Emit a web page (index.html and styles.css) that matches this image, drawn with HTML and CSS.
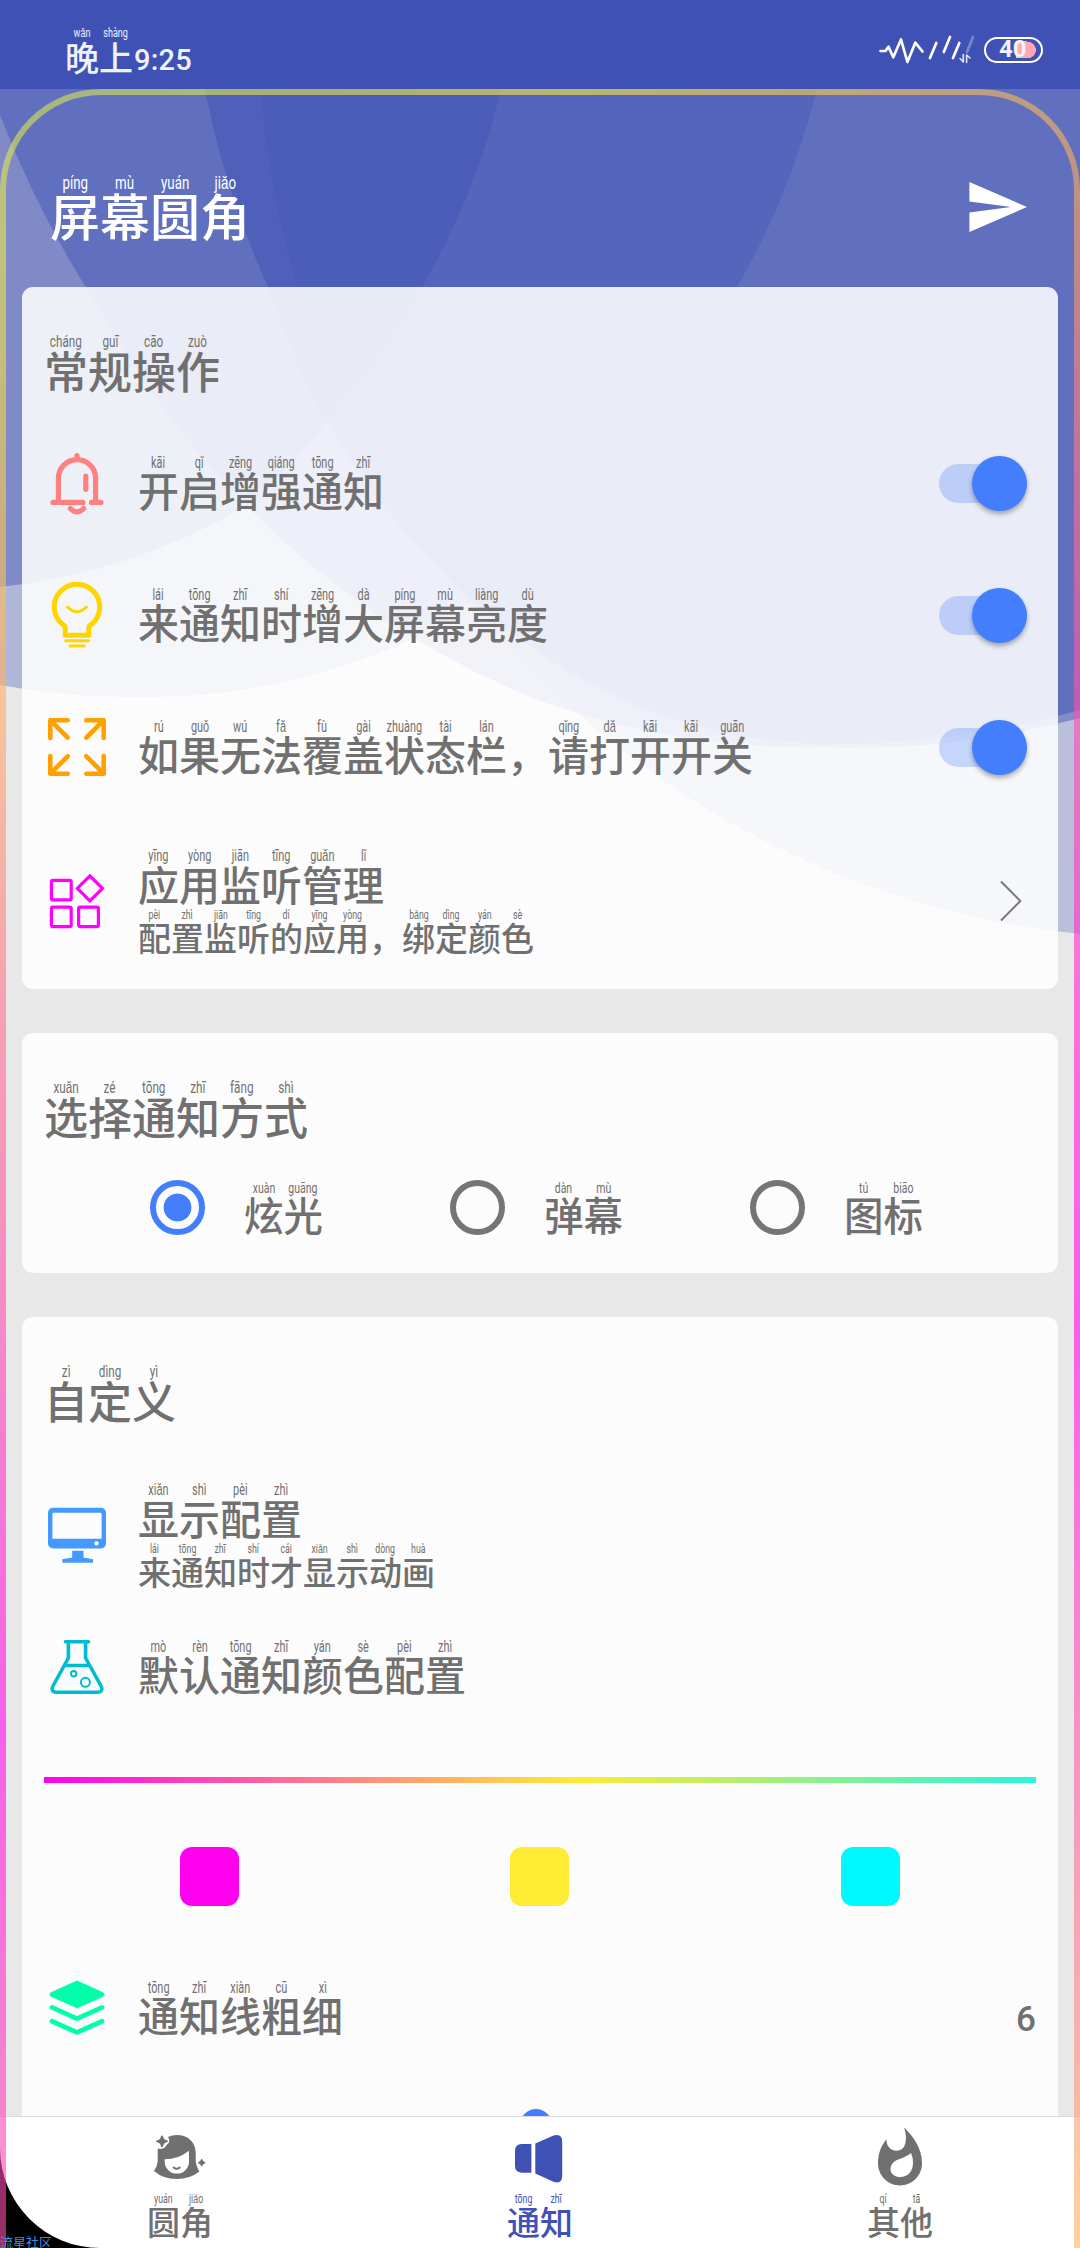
FILE: index.html
```html
<!DOCTYPE html>
<html lang="zh-CN">
<head>
<meta charset="utf-8">
<title>屏幕圆角</title>
<link rel="stylesheet" href="styles.css">
</head>
<body>
<svg class="backdrop" width="1080" height="911" viewBox="0 89 1080 911" aria-hidden="true">
  <g fill="#3f51b5">
    <path fill-opacity=".33" d="M0 89H817A760 760 0 0 1 737 287A720 720 0 0 1 540 545A660 660 0 0 1 410 640A640 640 0 0 1 140 697A700 700 0 0 1 0 685Z"/>
    <path fill-opacity=".44" d="M0 89H501A700 700 0 0 1 422 287A640 640 0 0 1 344 400A600 600 0 0 1 248 505A620 620 0 0 1 0 587Z"/>
    <path fill-opacity=".27" d="M261 89A892 892 0 0 0 540 678A892 892 0 0 0 1080 934V89Z"/>
    <path fill-opacity=".46" d="M0 89V115A1000 1000 0 0 0 94 300A900 900 0 0 0 248 507A860 860 0 0 0 540 701A800 800 0 0 0 826 747A860 860 0 0 0 1080 718V89Z"/>
    <path fill-opacity=".49" d="M205 89A900 900 0 0 0 268 287A700 700 0 0 0 540 653A520 520 0 0 0 820 744A900 900 0 0 0 1080 710V89Z"/>
  </g>
</svg>

<header class="status">
  <div class="clock zh"><ruby>晚<rt>wǎn</rt></ruby><ruby>上<rt>shàng</rt></ruby><span class="time">9:25</span></div>
  <div class="tray">
    <svg width="96" height="32" viewBox="879 34 96 32" fill="none" stroke="#fff" stroke-width="2.7" stroke-linecap="round" stroke-linejoin="round">
      <path d="M880.5 51H885.5L888.5 46.7L893.3 57.3L901 39.5L907.4 62L915.3 42.7L922.5 51.5"/>
      <path d="M930 58L936.3 43M943.8 52L950 37M953 58L959.3 43"/>
      <path d="M967 52L973 37" opacity=".3"/>
      <path d="M960 58.5L963.3 62V54.5M970 58L966.6 55V62.5" stroke-width="1.6" opacity=".85"/>
    </svg>
    <div class="battery"><span class="level">40</span></div>
  </div>
</header>

<section class="titlebar">
  <h1 class="zh"><ruby>屏<rt>píng</rt></ruby><ruby>幕<rt>mù</rt></ruby><ruby>圆<rt>yuán</rt></ruby><ruby>角<rt>jiǎo</rt></ruby></h1>
  <svg class="send" width="58" height="50" viewBox="0 0 58 50"><path fill="#fff" d="M.4 0L58 25L.4 50V30.6L42 25L.4 19.4Z"/></svg>
</section>

<main>
  <section class="card">
    <h2 class="zh"><ruby>常<rt>cháng</rt></ruby><ruby>规<rt>guī</rt></ruby><ruby>操<rt>cāo</rt></ruby><ruby>作<rt>zuò</rt></ruby></h2>

    <div class="row">
      <svg class="icon" viewBox="-33 -35 66 70" fill="none" stroke="#ff8080" stroke-width="5.2" stroke-linecap="round">
        <path d="M0-27.5V-24M-18.6 19V-4.8A18.6 18.6 0 0 1 18.6-4.8V19"/>
        <path d="M-24 19.4H5.8M14.5 19.4H24M8.8-7V6.3M-6.7 25.5Q0 32.3 6.7 25.5"/>
      </svg>
      <p class="label zh"><ruby>开<rt>kāi</rt></ruby><ruby>启<rt>qǐ</rt></ruby><ruby>增<rt>zēng</rt></ruby><ruby>强<rt>qiáng</rt></ruby><ruby>通<rt>tōng</rt></ruby><ruby>知<rt>zhī</rt></ruby></p>
      <span class="switch"></span>
    </div>

    <div class="row">
      <svg class="icon" viewBox="-33 -35 66 70" fill="none" stroke="#ffd500" stroke-width="5" stroke-linecap="round">
        <path stroke-linejoin="round" d="M-11.8 20.3V13Q-11.8 11-14 9.8A22.7 22.7 0 1 1 14 9.8Q11.8 11 11.8 13V20.3Z"/>
        <path stroke-width="3" d="M-11.4 25.8H11.6M-7 31H7.2M-9.5-8Q0 1.5 9.5-8"/>
      </svg>
      <p class="label zh"><ruby>来<rt>lái</rt></ruby><ruby>通<rt>tōng</rt></ruby><ruby>知<rt>zhī</rt></ruby><ruby>时<rt>shí</rt></ruby><ruby>增<rt>zēng</rt></ruby><ruby>大<rt>dà</rt></ruby><ruby>屏<rt>píng</rt></ruby><ruby>幕<rt>mù</rt></ruby><ruby>亮<rt>liàng</rt></ruby><ruby>度<rt>dù</rt></ruby></p>
      <span class="switch"></span>
    </div>

    <div class="row">
      <svg class="icon" viewBox="-33 -35 66 70" fill="none" stroke="#ffa000" stroke-width="4.6" stroke-linecap="round" stroke-linejoin="round">
        <path d="M-9.3-26.7H-26.7V-9M-26.7-26.7L-9.3-9.3"/>
        <path d="M9.3-26.7H26.7V-9M26.7-26.7L9.3-9.3"/>
        <path d="M-9.3 26.7H-26.7V9M-26.7 26.7L-9.3 9.3"/>
        <path d="M9.3 26.7H26.7V9M26.7 26.7L9.3 9.3"/>
      </svg>
      <p class="label zh"><ruby>如<rt>rú</rt></ruby><ruby>果<rt>guǒ</rt></ruby><ruby>无<rt>wú</rt></ruby><ruby>法<rt>fǎ</rt></ruby><ruby>覆<rt>fù</rt></ruby><ruby>盖<rt>gài</rt></ruby><ruby>状<rt>zhuàng</rt></ruby><ruby>态<rt>tài</rt></ruby><ruby>栏<rt>lán</rt></ruby><span class="comma">，</span><ruby>请<rt>qǐng</rt></ruby><ruby>打<rt>dǎ</rt></ruby><ruby>开<rt>kāi</rt></ruby><ruby>开<rt>kāi</rt></ruby><ruby>关<rt>guān</rt></ruby></p>
      <span class="switch"></span>
    </div>

    <div class="row row-tall">
      <svg class="icon" viewBox="-33 -35 66 70" fill="none" stroke="#f0f" stroke-width="3.2">
        <rect x="-25.6" y="-20.7" width="19.8" height="19.6" rx="1.5"/>
        <rect x="-25.6" y="6.2" width="19.8" height="19.4" rx="1.5"/>
        <rect x="1.6" y="6.2" width="19.8" height="19.4" rx="1.5"/>
        <path stroke-linejoin="round" d="M12.9-25.2L25.5-12.7L12.9-.2L.3-12.7Z"/>
      </svg>
      <div class="stack">
        <p class="label zh"><ruby>应<rt>yīng</rt></ruby><ruby>用<rt>yòng</rt></ruby><ruby>监<rt>jiān</rt></ruby><ruby>听<rt>tīng</rt></ruby><ruby>管<rt>guǎn</rt></ruby><ruby>理<rt>lǐ</rt></ruby></p>
        <p class="hint zh"><ruby>配<rt>pèi</rt></ruby><ruby>置<rt>zhì</rt></ruby><ruby>监<rt>jiān</rt></ruby><ruby>听<rt>tīng</rt></ruby><ruby>的<rt>dí</rt></ruby><ruby>应<rt>yīng</rt></ruby><ruby>用<rt>yòng</rt></ruby><span class="comma">，</span><ruby>绑<rt>bǎng</rt></ruby><ruby>定<rt>dìng</rt></ruby><ruby>颜<rt>yán</rt></ruby><ruby>色<rt>sè</rt></ruby></p>
      </div>
      <svg class="chevron" width="24" height="44" viewBox="0 0 24 44"><path fill="none" stroke="#777" stroke-width="2" d="M2 2.5L21.3 22L2 41.5"/></svg>
    </div>
  </section>

  <section class="card">
    <h2 class="zh"><ruby>选<rt>xuǎn</rt></ruby><ruby>择<rt>zé</rt></ruby><ruby>通<rt>tōng</rt></ruby><ruby>知<rt>zhī</rt></ruby><ruby>方<rt>fāng</rt></ruby><ruby>式<rt>shì</rt></ruby></h2>
    <div class="radios">
      <div class="radio checked"><i></i><p class="zh"><ruby>炫<rt>xuàn</rt></ruby><ruby>光<rt>guāng</rt></ruby></p></div>
      <div class="radio"><i></i><p class="zh"><ruby>弹<rt>dàn</rt></ruby><ruby>幕<rt>mù</rt></ruby></p></div>
      <div class="radio"><i></i><p class="zh"><ruby>图<rt>tú</rt></ruby><ruby>标<rt>biāo</rt></ruby></p></div>
    </div>
  </section>

  <section class="card">
    <h2 class="zh"><ruby>自<rt>zì</rt></ruby><ruby>定<rt>dìng</rt></ruby><ruby>义<rt>yì</rt></ruby></h2>

    <div class="row row-tall">
      <svg class="icon" viewBox="-33 -35 66 70" fill="#49f">
        <path fill-rule="evenodd" d="M-24-27.3H24A5 5 0 0 1 29-22.3V8A5 5 0 0 1 24 13.5H-24A5 5 0 0 1-29 8V-22.3A5 5 0 0 1-24-27.3ZM-23.5-22.3Q-24.6-22.3-24.6-21V3.8H24.6V-21Q24.6-22.3 23.5-22.3ZM19.4 6.2A2.2 2.2 0 1 0 19.5 6.2Z"/>
        <path d="M-4.8 15.8H6.5V22.5L16 24.3V27.7H-14.7V24.3L-4.8 22.5Z"/>
      </svg>
      <div class="stack">
        <p class="label zh"><ruby>显<rt>xiǎn</rt></ruby><ruby>示<rt>shì</rt></ruby><ruby>配<rt>pèi</rt></ruby><ruby>置<rt>zhì</rt></ruby></p>
        <p class="hint zh"><ruby>来<rt>lái</rt></ruby><ruby>通<rt>tōng</rt></ruby><ruby>知<rt>zhī</rt></ruby><ruby>时<rt>shí</rt></ruby><ruby>才<rt>cái</rt></ruby><ruby>显<rt>xiǎn</rt></ruby><ruby>示<rt>shì</rt></ruby><ruby>动<rt>dòng</rt></ruby><ruby>画<rt>huà</rt></ruby></p>
      </div>
    </div>

    <div class="row row-short">
      <svg class="icon" viewBox="-33 -35 66 70" fill="none" stroke="#00bcd0" stroke-width="3.6" stroke-linecap="round" stroke-linejoin="round">
        <path d="M-11.5-25.3H11.5M-8.6-25V-9L-24.3 19.5Q-26.5 25.3-20.5 25.3H20.5Q26.5 25.3 24.3 19.5L8.6-9V-25M-12-1.5H12"/>
        <circle cx="-3.3" cy="6.7" r="2.7" stroke-width="2"/>
        <circle cx="8.4" cy="15.3" r="4.5" stroke-width="2"/>
      </svg>
      <p class="label zh"><ruby>默<rt>mò</rt></ruby><ruby>认<rt>rèn</rt></ruby><ruby>通<rt>tōng</rt></ruby><ruby>知<rt>zhī</rt></ruby><ruby>颜<rt>yán</rt></ruby><ruby>色<rt>sè</rt></ruby><ruby>配<rt>pèi</rt></ruby><ruby>置<rt>zhì</rt></ruby></p>
    </div>

    <div class="spectrum"></div>
    <div class="swatches"><i class="magenta"></i><i class="yellow"></i><i class="cyan"></i></div>

    <div class="row row-short">
      <svg class="icon" viewBox="-33 -35 66 70" fill="#00ffab">
        <path d="M0-27.5L25.5-16Q29.5-13.5 25.5-11L0 .2L-25.5-11Q-29.5-13.5-25.5-16Z"/>
        <path fill="none" stroke="#00ffab" stroke-width="4.8" stroke-linecap="round" stroke-linejoin="round" d="M-25-.6L0 10.6L25-.6M-25 13.2L0 24.4L25 13.2"/>
      </svg>
      <p class="label zh"><ruby>通<rt>tōng</rt></ruby><ruby>知<rt>zhī</rt></ruby><ruby>线<rt>xiàn</rt></ruby><ruby>粗<rt>cū</rt></ruby><ruby>细<rt>xì</rt></ruby></p>
      <span class="value">6</span>
    </div>
    <div class="slider"><i></i></div>
  </section>
</main>

<nav>
  <a class="tab">
    <svg width="60" height="60" viewBox="-30 -30 60 60" fill="#707070">
      <path fill-rule="evenodd" d="M-12-20Q-8-22-3.3-22C8-22 15.7-15 15.7-4V3Q15.7 8.5 19.4 14.5Q10 22-3.3 22Q-17 22-26 14Q-22.3 9-22.3 4V-8.5Q-19-7.5-16-9Q-13.5-11-12.8-12.8Q-10.5-14-10.7-16.5Q-11-18.5-12-20ZM-15.3 2.3V5.5A12.2 12.2 0 0 0 9 5.5V-6.3Q-2 2.3-15.3 2.3Z"/>
      <path d="M-18-20.6Q-17.2-16.3-13.2-15.7Q-17.2-15-18-10.8Q-18.8-15-22.8-15.7Q-18.8-16.3-18-20.6Z" stroke="#707070" stroke-width="2" stroke-linejoin="round"/>
      <path d="M21.7 2.3Q22.4 5 25.2 5.7Q22.4 6.4 21.7 9.1Q21 6.4 18.2 5.7Q21 5 21.7 2.3Z" stroke="#707070" stroke-width="1" stroke-linejoin="round"/>
      <path d="M-6.3 10.5Q-3.3 13-.3 10.5" fill="none" stroke="#707070" stroke-width="2" stroke-linecap="round"/>
    </svg>
    <span class="zh"><ruby>圆<rt>yuán</rt></ruby><ruby>角<rt>jiǎo</rt></ruby></span>
  </a>
  <a class="tab active">
    <svg width="60" height="60" viewBox="-30 -30 60 60" fill="#3f51b5">
      <path d="M-8.6-13V15.7H-18.5Q-25 15-25 9V-6.5Q-25-12.5-18.5-13Z"/>
      <path d="M-4.7-13.6L13.5-21.5Q22.2-24 22.2-15V18.5Q22.2 27.5 13.5 24.8L-4.7 16.5Z"/>
    </svg>
    <span class="zh"><ruby>通<rt>tōng</rt></ruby><ruby>知<rt>zhī</rt></ruby></span>
  </a>
  <a class="tab">
    <svg width="60" height="60" viewBox="-30 -30 60 60" fill="#707070">
      <path fill-rule="evenodd" d="M4-29.5C14-20 22-8 22 6C22 19 12 28.4 0 28.4S-22 19 -22 6C-22-4-18.5-12-13.4-17.8C-14-11-9-6.3-3.5-6.3C6-6.3 8-18 4-29.5ZM11-4C5 1-2 2-5.5 4.5C-12.5 10-10 20 0 20C9 20 13 13 13 6Q13 0 11-4Z"/>
    </svg>
    <span class="zh"><ruby>其<rt>qí</rt></ruby><ruby>他<rt>tā</rt></ruby></span>
  </a>
</nav>

<svg class="glow" width="1080" height="2248" viewBox="0 0 1080 2248" aria-hidden="true">
  <defs>
    <linearGradient id="left" gradientUnits="userSpaceOnUse" x1="0" y1="89" x2="0" y2="2248">
      <stop offset="0" stop-color="#d6e653"/><stop offset=".07" stop-color="#e8e94b"/><stop offset=".15" stop-color="#f8d848"/><stop offset=".27" stop-color="#ffb25f"/><stop offset=".42" stop-color="#ff738e"/><stop offset=".58" stop-color="#ff48b3"/><stop offset=".76" stop-color="#ff06ea"/><stop offset=".91" stop-color="#fc3ac0"/><stop offset="1" stop-color="#fc50aa"/>
    </linearGradient>
    <linearGradient id="top" gradientUnits="userSpaceOnUse" x1="100" y1="0" x2="980" y2="0">
      <stop offset="0" stop-color="#d6e653"/><stop offset=".55" stop-color="#ffeb3b"/><stop offset="1" stop-color="#fbbd57"/>
    </linearGradient>
    <linearGradient id="right" gradientUnits="userSpaceOnUse" x1="0" y1="89" x2="0" y2="2248">
      <stop offset="0" stop-color="#fbbd57"/><stop offset=".1" stop-color="#fe916b"/><stop offset=".28" stop-color="#fb54ad"/><stop offset=".42" stop-color="#ff26cd"/><stop offset=".57" stop-color="#ff05eb"/><stop offset=".76" stop-color="#ff58b0"/><stop offset=".91" stop-color="#ff9180"/><stop offset="1" stop-color="#ffb55f"/>
    </linearGradient>
  </defs>
  <path fill="#000" d="M0 2148A100 100 0 0 0 100 2248H0Z"/>
  <g fill="none" stroke-width="6" stroke-opacity=".6">
    <path stroke="url(#left)" d="M3 2248V190A98 98 0 0 1 101 92"/>
    <path stroke="url(#top)" d="M101 92L979 92.01"/>
    <path stroke="url(#right)" d="M979 92A98 98 0 0 1 1077 190V2248"/>
  </g>
</svg>
<div class="mark">流星社区</div>
</body>
</html>
```
FILE: styles.css
```css
* {
  box-sizing: border-box;
  margin: 0;
  padding: 0;
}

body {
  position: relative;
  display: flex;
  flex-direction: column;
  width: 1080px;
  height: 2248px;
  overflow: hidden;
  background: #e8e8e8;
  color: #707070;
  font-family: Roboto, "Noto Sans CJK SC", sans-serif;
}

svg {
  display: block;
  flex: none;
}

.backdrop {
  position: absolute;
  top: 89px;
  left: 0;
  z-index: -1;
}

/* One em-wide cell per character, its reading set above it */
.zh {
  display: flex;
  font-family: Roboto, "Noto Sans CJK SC", sans-serif;
  font-weight: 500;
  line-height: 1;
  align-items: flex-end;
}

.zh ruby {
  display: flex;
  flex-direction: column;
  align-items: center;
  flex: none;
  width: 1em;
  margin-bottom: -0.095em;
}

.zh rt {
  display: block;
  order: -1;
  margin-bottom: 0.13em;
  font: 400 0.38em/1 Roboto, sans-serif;
  white-space: nowrap;
  transform: scaleX(0.7);
}

.comma {
  width: 1em;
  margin-bottom: -0.095em;
}

/* status bar */
.status {
  display: flex;
  flex: none;
  justify-content: space-between;
  align-items: flex-start;
  height: 89px;
  padding: 27px 37px 0 65px;
  background: #3f51b5;
  color: #f0f2fa;
}

.clock {
  font-size: 34px;
}

.time {
  margin: 0 0 -3px 1px;
  font: 500 29px/1 Roboto, sans-serif;
  letter-spacing: 0.2px;
}

.tray {
  display: flex;
  gap: 9px;
  padding-top: 7px;
}

.battery {
  width: 59px;
  height: 26px;
  margin-top: 2.5px;
  border: 2.4px solid #fff;
  border-radius: 13px;
  background:
    radial-gradient(ellipse 9px 8.5px at 41px 50%, #ffa8b4 96%, transparent 100%),
    linear-gradient(90deg, #ffcc88, #ffa8b4) 30px 50% / 11px 17px no-repeat;
}

.level {
  display: block;
  padding-left: 13px;
  font: 700 24px/21px Roboto, sans-serif;
}

/* title bar */
.titlebar {
  display: flex;
  flex: none;
  justify-content: space-between;
  align-items: flex-start;
  height: 198px;
  padding: 84px 53px 0 50px;
  color: #fff;
}

.titlebar h1 {
  font-size: 50px;
}

.send {
  margin-top: 9px;
}

/* cards */
main {
  display: flex;
  flex: 1;
  flex-direction: column;
  gap: 44px;
  min-height: 0;
  overflow: hidden;
  padding: 0 22px;
}

.card {
  flex: none;
  padding: 0 22px;
  border-radius: 11px;
  background: rgba(255, 255, 255, 0.87);
}

.card h2 {
  height: 130px;
  padding-top: 46px;
  align-items: flex-start;
  font-size: 44px;
}

.row {
  display: flex;
  align-items: center;
  height: 132px;
}

.row-tall {
  height: 176px;
}

.row-short {
  height: 88px;
}

.icon {
  width: 66px;
  height: 70px;
  margin-right: 28px;
}

.label {
  font-size: 41px;
}

.hint {
  margin-top: 5px;
  font-size: 33px;
}

.switch {
  position: relative;
  width: 88px;
  height: 39px;
  margin-left: auto;
  margin-right: 9px;
  border-radius: 19.5px;
  background: rgba(67, 126, 252, 0.27);
}

.switch::after {
  content: "";
  position: absolute;
  top: -8px;
  right: 0;
  width: 55px;
  height: 55px;
  border-radius: 50%;
  background: #437efc;
  box-shadow: 0 3px 5px rgba(0, 0, 0, 0.32);
}

.chevron {
  margin-left: auto;
  margin-right: 13px;
}

/* radio group */
.radios {
  display: grid;
  grid-template-columns: repeat(3, 300px);
  height: 110px;
  padding-left: 106px;
}

.radio {
  display: flex;
  align-items: center;
  gap: 39px;
  height: 88px;
  font-size: 39.5px;
}

.radio i {
  width: 55px;
  height: 55px;
  border: 6px solid #757575;
  border-radius: 50%;
}

.radio.checked i {
  border-color: #437efc;
  background: radial-gradient(circle, #437efc 13.5px, transparent 14.3px);
}

/* notification colours */
.spectrum {
  height: 6px;
  margin-top: 66px;
  background: linear-gradient(90deg, #ff00ee, #ffeb33 54%, #26f5dd);
}

.swatches {
  display: grid;
  grid-template-columns: repeat(3, 1fr);
  justify-items: center;
  margin: 64px 0 58px;
}

.swatches i {
  width: 59px;
  height: 59px;
  border-radius: 12px;
}

.magenta {
  background: #ff00ee;
}

.yellow {
  background: #ffeb33;
}

.cyan {
  background: #00f9ff;
}

.value {
  margin: 22px 0 0 auto;
  font: 500 35px/1 Roboto, sans-serif;
}

.slider {
  height: 100px;
  padding: 57px 0 0 476px;
}

.slider i {
  display: block;
  width: 32px;
  height: 32px;
  border-radius: 50%;
  background: #437efc;
}

/* bottom navigation */
nav {
  display: grid;
  flex: none;
  grid-template-columns: repeat(3, 1fr);
  height: 132px;
  padding-top: 10px;
  border-top: 1px solid #d9d9d9;
  background: #fff;
}

.tab {
  display: flex;
  flex-direction: column;
  align-items: center;
  gap: 6px;
  font-size: 33px;
}

.tab.active {
  color: #3f51b5;
}

/* edge lighting over the whole screen */
.glow {
  position: absolute;
  top: 0;
  left: 0;
}

.mark {
  position: absolute;
  left: 0;
  bottom: -1px;
  color: #3b8fe0;
  font: 400 13px/14px "Noto Sans CJK SC", sans-serif;
}
```
